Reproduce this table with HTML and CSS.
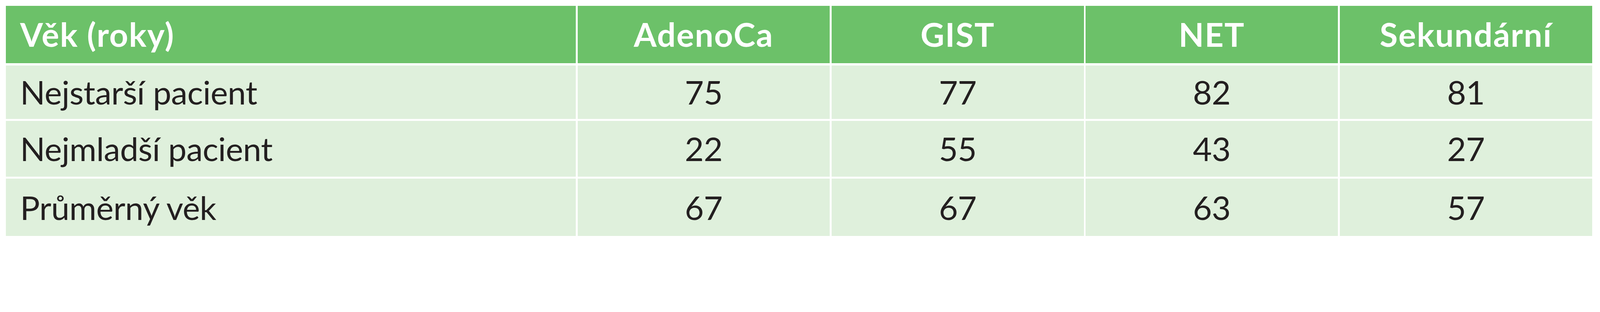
FILE: index.html
```html
<!DOCTYPE html>
<html lang="cs">
<head>
<meta charset="utf-8">
<title>Věk pacientů</title>
<link rel="stylesheet" href="styles.css">
</head>
<body>
<div class="table">
  <div class="cell head first">Věk (roky)</div>
  <div class="cell head">AdenoCa</div>
  <div class="cell head">GIST</div>
  <div class="cell head">NET</div>
  <div class="cell head">Sekundární</div>

  <div class="cell body first">Nejstarší pacient</div>
  <div class="cell body">75</div>
  <div class="cell body">77</div>
  <div class="cell body">82</div>
  <div class="cell body">81</div>

  <div class="cell body first">Nejmladší pacient</div>
  <div class="cell body">22</div>
  <div class="cell body">55</div>
  <div class="cell body">43</div>
  <div class="cell body">27</div>

  <div class="cell body first">Průměrný věk</div>
  <div class="cell body">67</div>
  <div class="cell body">67</div>
  <div class="cell body">63</div>
  <div class="cell body">57</div>
</div>
</body>
</html>
```

FILE: styles.css
```css
:root {
  --u: calc(100vw / 5158);
}

html, body {
  margin: 0;
  padding: 0;
  background: #ffffff;
  overflow: hidden;
}

body {
  padding: calc(19 * var(--u));
  font-family: Lato, "Open Sans", "Noto Sans", sans-serif;
}

.table {
  display: grid;
  grid-template-columns:
    calc(1837 * var(--u))
    calc(813 * var(--u))
    calc(813 * var(--u))
    calc(813 * var(--u))
    calc(814 * var(--u));
  grid-template-rows:
    calc(185 * var(--u))
    calc(173 * var(--u))
    calc(179 * var(--u))
    calc(185 * var(--u));
  column-gap: calc(6 * var(--u));
  row-gap: calc(7 * var(--u));
}

.cell {
  display: flex;
  align-items: center;
  justify-content: center;
  font-size: calc(106 * var(--u));
  line-height: 1;
  white-space: nowrap;
}

.cell.first {
  justify-content: flex-start;
  padding-left: calc(46 * var(--u));
}

.head {
  background: #6cc169;
  color: #ffffff;
  font-weight: 700;
  letter-spacing: calc(2.5 * var(--u));
}

.body {
  background: #dff0dc;
  color: #231f20;
  font-weight: 400;
  letter-spacing: calc(-0.6 * var(--u));
}
```
